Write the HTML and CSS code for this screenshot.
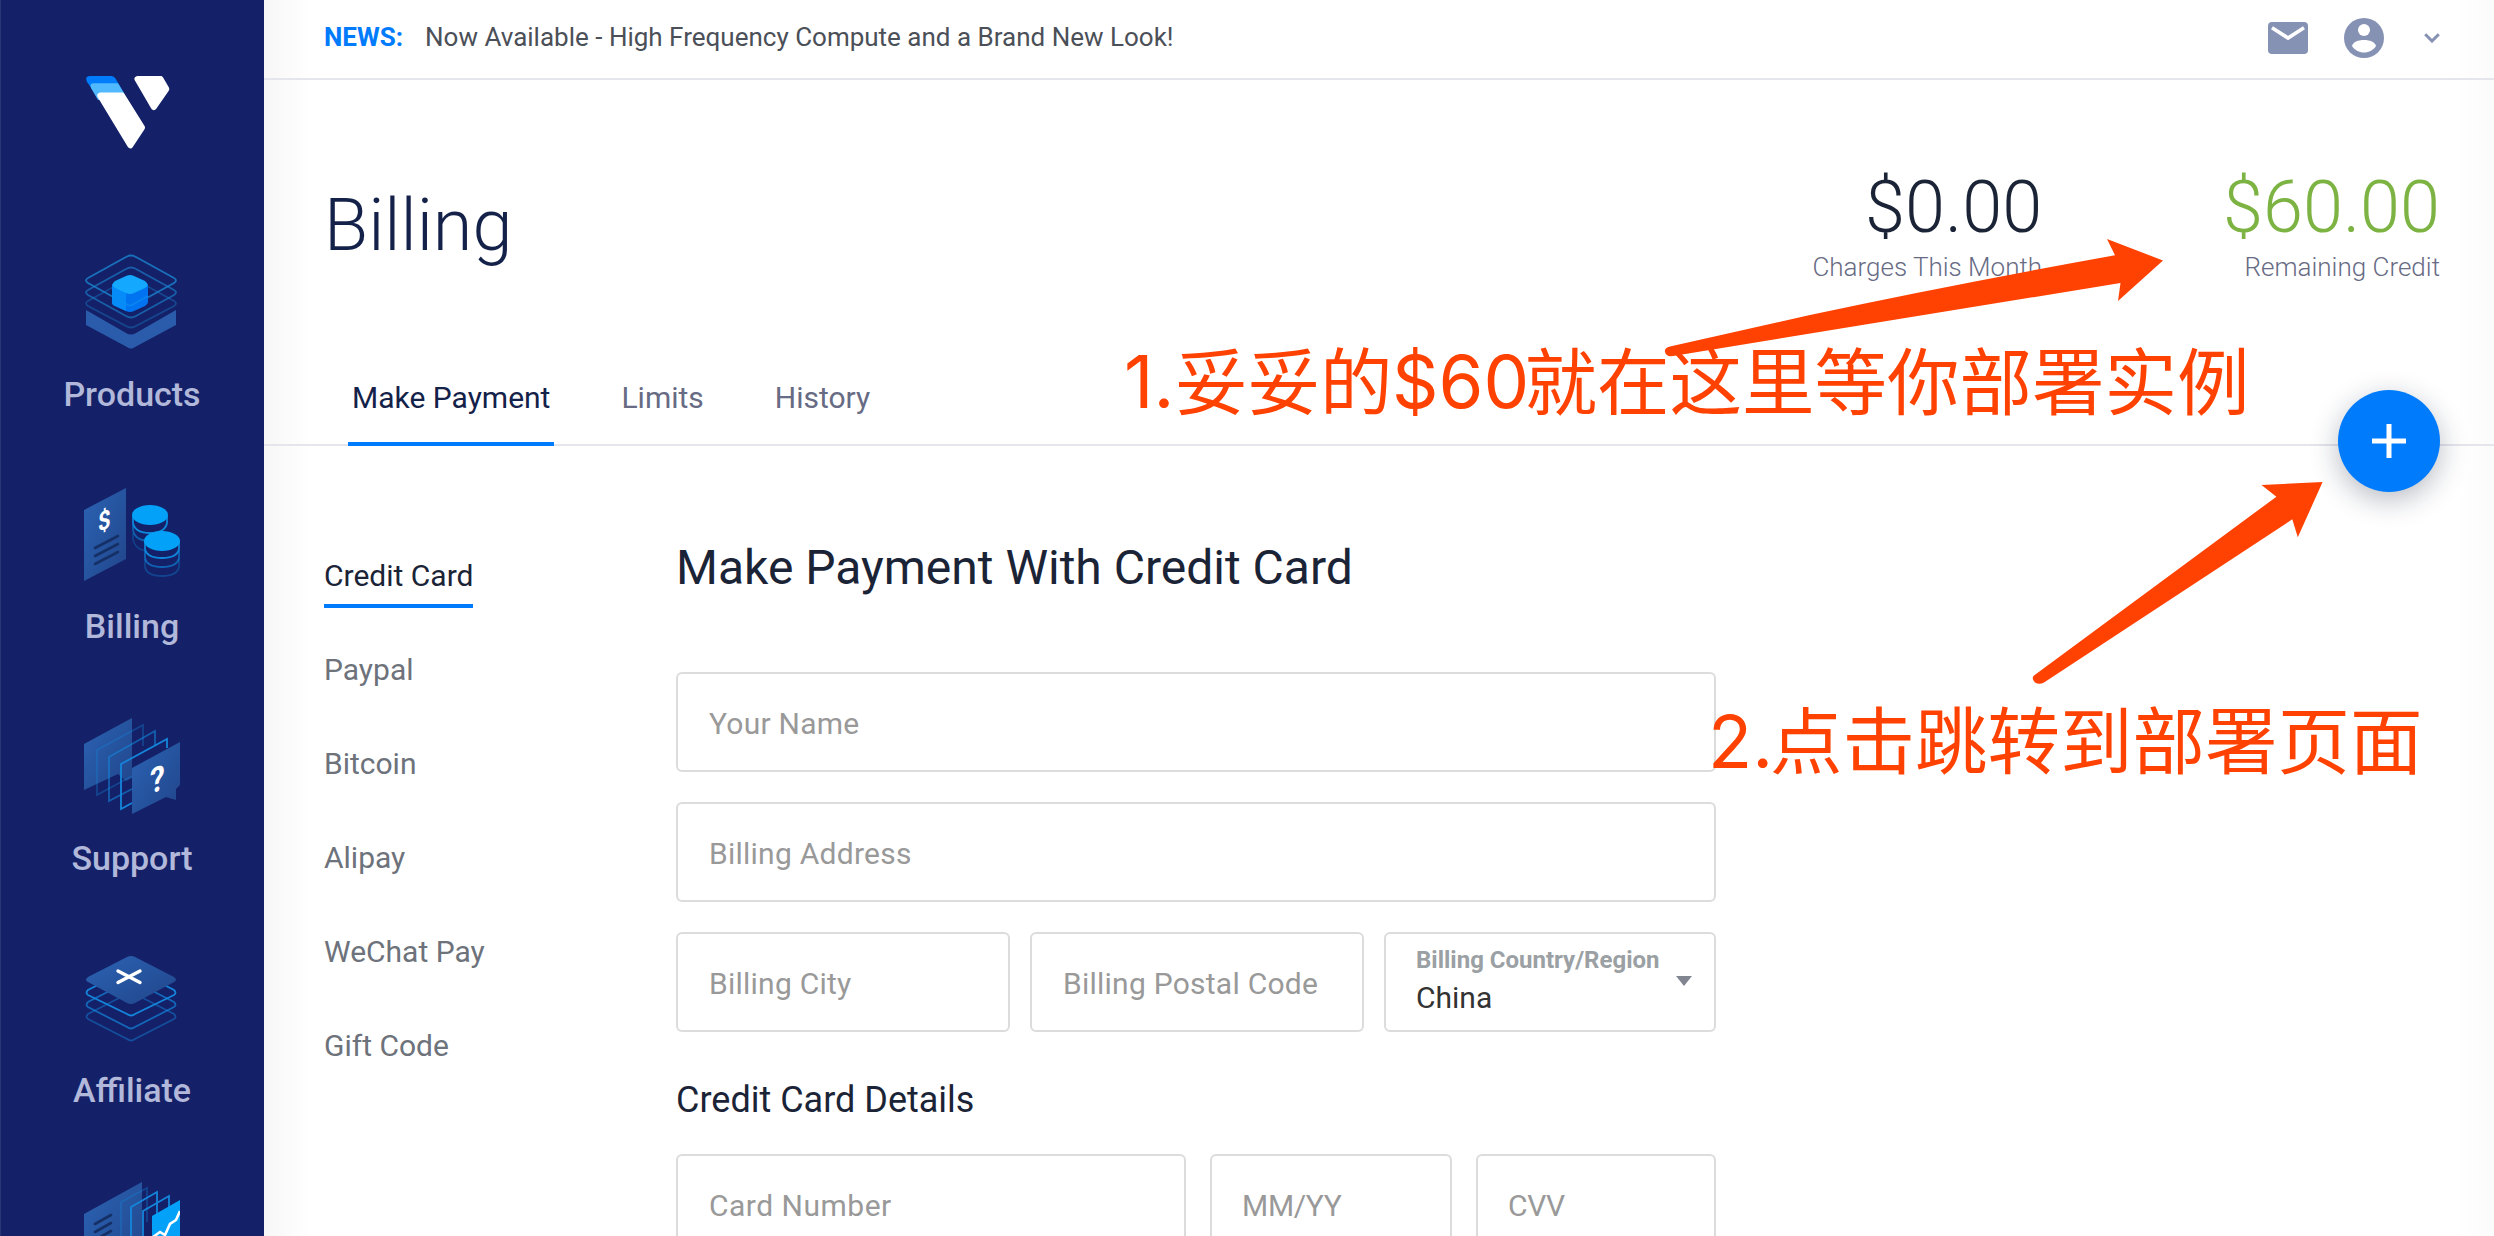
FILE: index.html
```html
<!DOCTYPE html>
<html lang="en">
<head>
<meta charset="utf-8">
<title>Billing</title>
<link rel="stylesheet" href="styles.css">
</head>
<body>
<div class="app">
  <aside class="sidebar">
    <svg class="logo" viewBox="0 0 84 73" width="84" height="73">
      <path d="M4 0h21.500q2.500 0 4 2.500L38 17 11 20 1 6Q-1.500 0 4 0z" fill="#007bfc"/>
      <path d="M8 7.200h24L38.500 18 12 24 5 12q-2-4.800 3-4.800z" fill="#51b9ff"/>
      <g fill="#fff" stroke="#fff" stroke-width="6" stroke-linejoin="round">
        <path d="M14.300 19.600H36L56 51.500 44.300 69.300z"/>
        <path d="M51.500 3H74.500L80.300 13 67.800 31z"/>
      </g>
    </svg>
    <nav class="menu">
      <a class="menu-item">
        <svg class="menu-icon" viewBox="0 0 96 96">
          <defs>
            <linearGradient id="steel" x1="0" y1="0" x2="1" y2="1"><stop offset="0" stop-color="#2b63b4"/><stop offset="1" stop-color="#21458a"/></linearGradient>
          </defs>
          <path d="M2 56l40 23q5 3 10 0l40-23v15L51 93q-4 3-8 0L2 71z" fill="#2b5cab"/>
          <g fill="none" stroke-width="1.8" stroke="#1a7fcb">
            <path d="M42 26q5-3 10 0l38 21q4 2 0 5L52 72q-5 3-10 0L4 52q-4-3 0-5z" opacity=".4"/>
            <path d="M42 15q5-3 10 0l38 21q4 2 0 5L52 62q-5 3-10 0L4 41q-4-3 0-5z" opacity=".65"/>
            <path d="M42 3q5-3 10 0l38 21q4 2 0 5L52 50q-5 3-10 0L4 29q-4-3 0-5z" opacity=".85"/>
          </g>
          <path d="M28 30v18q0 3 3 4l11 5q4 2 8 0l11-5q3-2 3-4V30z" fill="#0074f0"/>
          <path d="M28 30v18q0 3 3 4l11 5V38z" fill="#068cf8"/>
          <path d="M64 42L48 51q-2 1-4 0L28 42" fill="none" stroke="#0c8df0" stroke-width="1.6" opacity=".7"/>
          <path d="M31 27l11-5q4-2 8 0l11 5q5 4 0 7l-11 5q-4 2-8 0l-11-5q-5-3 0-7z" fill="#14a9ff"/>
        </svg>
        <span>Products</span>
      </a>
      <a class="menu-item">
        <svg class="menu-icon" viewBox="0 0 96 96">
          <path d="M0 24L42 2v71L0 95z" fill="url(#steel)"/>
          <text class="glyph" x="0" y="0" font-size="26" transform="matrix(.85 -.35 0 1 14 46)">$</text>
          <path d="M11 62l23-12M11 70l23-12M11 78l23-12" stroke="#153066" stroke-width="2.6" stroke-linecap="round"/>
          <g fill="none" stroke="#0e86da" stroke-width="1.8">
            <path d="M49 30v7q2 10 17 10t17-10v-7"/><path d="M49 38v6q2 11 17 11" opacity=".6"/><path d="M49 47v6q1 9 12 12" opacity=".3"/>
          </g>
          <ellipse cx="66" cy="29" rx="18" ry="10" fill="#03a1f8"/>
          <path d="M60 58q0-12 18-12t18 12v30H60z" fill="#142168"/>
          <g fill="none" stroke="#0e86da" stroke-width="1.8">
            <path d="M61 55v8q2 9 17 9t17-9v-8"/><path d="M61 64v8q2 9 17 9t17-9v-8" opacity=".65"/><path d="M61 73v8q2 9 17 9t17-9v-8" opacity=".35"/>
          </g>
          <ellipse cx="78" cy="55" rx="18" ry="10" fill="#03a1f8"/>
        </svg>
        <span>Billing</span>
      </a>
      <a class="menu-item">
        <svg class="menu-icon" viewBox="0 0 96 96">
          <path d="M0 26L48 0v60l-6 3-8-7L0 72z" fill="url(#steel)"/>
          <g fill="none" stroke="#1485db" stroke-width="1.8">
            <path d="M59 28V7L13 32v45l35-19" opacity=".35"/>
            <path d="M71 28V13L25 39v44l23-12" opacity=".6"/>
            <path d="M83 30V21L37 46v45l11-6"/>
          </g>
          <path d="M48 50l48-26v43l-4 4v11l-10-3L48 96z" fill="url(#steel)"/>
          <text class="glyph" font-size="35" transform="matrix(.85 -.3 0 1 66 76)">?</text>
        </svg>
        <span>Support</span>
      </a>
      <a class="menu-item">
        <svg class="menu-icon" viewBox="0 0 96 96">
          <g fill="none" stroke="#1485db" stroke-width="1.8">
            <path d="M43 44q4-2 8 0l39 20q3 3 0 5L51 89q-4 3-8 0L4 69q-3-2 0-5z" opacity=".45"/>
            <path d="M43 32q4-2 8 0l39 20q3 3 0 5L51 77q-4 3-8 0L4 57q-3-2 0-5z" opacity=".7"/>
            <path d="M43 20q4-2 8 0l39 20q3 3 0 5L51 64q-4 3-8 0L4 45q-3-2 0-5z"/>
          </g>
          <path d="M43 7q4-2 8 0l39 20q4 3 0 5L51 53q-4 2-8 0L4 32q-4-2 0-5z" fill="url(#steel)"/>
          <path d="M34 21l22 11.500M56 21L34 32.500" stroke="#fff" stroke-width="3.4" stroke-linecap="round"/>
        </svg>
        <span>Affiliate</span>
      </a>
      <a class="menu-item">
        <svg class="menu-icon" viewBox="0 0 96 96">
          <path d="M0 32L58 0v66L0 94z" fill="url(#steel)"/>
          <path d="M11 42l16-9M11 50l16-9M11 58l16-9" stroke="#153066" stroke-width="2.6" stroke-linecap="round"/>
          <g fill="none" stroke="#1485db" stroke-width="1.8">
            <path d="M37 80V20L63 6v34" opacity=".35"/><path d="M47 80V25l26-15v30"/><path d="M59 80V29l26-15v12"/>
          </g>
          <path d="M68 34l28-16v60H68z" fill="#03a1f8"/>
          <path d="M69 55l7-5 5 3 5-11 6-4 4-9" fill="none" stroke="#fff" stroke-width="2.6"/>
        </svg>
      </a>
    </nav>
  </aside>

  <main class="main">
    <header class="topbar">
      <div class="news"><b>NEWS:</b><span>Now Available - High Frequency Compute and a Brand New Look!</span></div>
      <div class="account">
        <svg width="40" height="32" viewBox="0 0 40 32"><rect width="40" height="32" rx="4" fill="#8692b4"/><path d="M4 5.800l16 10.200 16-10.200" fill="none" stroke="#fff" stroke-width="3.600"/></svg>
        <svg width="40" height="40" viewBox="0 0 40 40"><circle cx="20" cy="20" r="20" fill="#8692b4"/><circle cx="20" cy="12" r="6" fill="#fff"/><path d="M8 28c1-4 6-6 12-6s11 2 12 6c-2.500 4-7 6.500-12 6.500S10.500 32 8 28z" fill="#fff"/></svg>
        <svg class="chevron" width="16" height="10" viewBox="0 0 16 10"><path d="M1.200 1.200L8 8l6.800-6.800" fill="none" stroke="#8692b4" stroke-width="3"/></svg>
      </div>
    </header>

    <section class="page-head">
      <h1>Billing</h1>
      <div class="stats">
        <div class="stat"><strong>$0.00</strong><span>Charges This Month</span></div>
        <div class="stat credit"><strong>$60.00</strong><span>Remaining Credit</span></div>
      </div>
    </section>

    <nav class="tabs">
      <a class="tab active">Make Payment</a>
      <a class="tab">Limits</a>
      <a class="tab">History</a>
      <button class="add"><svg width="34" height="34" viewBox="0 0 34 34"><path d="M17 0v34M0 17h34" stroke="#fff" stroke-width="5"/></svg></button>
    </nav>

    <section class="content">
      <nav class="methods">
        <a class="method active">Credit Card</a>
        <a class="method">Paypal</a>
        <a class="method">Bitcoin</a>
        <a class="method">Alipay</a>
        <a class="method">WeChat Pay</a>
        <a class="method">Gift Code</a>
      </nav>
      <form class="form">
        <h2>Make Payment With Credit Card</h2>
        <div class="field">Your Name</div>
        <div class="field">Billing Address</div>
        <div class="row place">
          <div class="field">Billing City</div>
          <div class="field">Billing Postal Code</div>
          <div class="field select"><div><label>Billing Country/Region</label><span>China</span></div><i class="caret"></i></div>
        </div>
        <h3>Credit Card Details</h3>
        <div class="row card">
          <div class="field number">Card Number</div>
          <div class="field short">MM/YY</div>
          <div class="field short">CVV</div>
        </div>
      </form>
    </section>
  </main>

  <svg class="notes" width="2494" height="1236" viewBox="0 0 2494 1236">
    <path d="M1670 346.500L1810 315Q1950 285 2115 255.300L2107 239l56 21.500L2118 301l2.500-18L1673 356q-7 1-8-4-1-4 5-5.500z"/>
    <path d="M2034 675.500L2276.400 496.700 2261.500 485l61.100-3L2297.800 537.300 2292.300 519.300 2044 682.500q-5 2.500-9 0-4-4-1-7z"/>
    <text y="409"><tspan x="1124" y="408">1.</tspan><tspan x="1175" y="409">妥妥的</tspan><tspan x="1392" y="408">$60</tspan><tspan x="1524.500" y="409">就在这里等你部署实例</tspan></text>
    <text y="768"><tspan x="1708">2.</tspan><tspan x="1770">点击跳转到部署页面</tspan></text>
  </svg>
</div>
</body>
</html>
```
FILE: styles.css
```css
* { box-sizing: border-box; }
body { margin: 0; font-family: Roboto, "Noto Sans CJK SC", sans-serif; color: #1b2436; background: #fff; }
h1, h2, h3 { margin: 0; font-weight: 400; }
.app { position: relative; display: flex; width: 2494px; height: 1236px; overflow: hidden; }

.sidebar { width: 264px; flex: none; background: #142168; box-shadow: inset 1px 0 #2a3573; display: flex; flex-direction: column; align-items: center; padding-top: 76px; }
.logo { margin-left: -8px; flex: none; }
.menu { display: flex; flex-direction: column; margin-top: 105px; align-items: center; }
.menu-item { height: 232px; flex: none; display: flex; flex-direction: column; align-items: center; gap: 24px; color: #b1b8d9; font-size: 34px; line-height: 40px; font-weight: 500; }
.menu-icon { width: 96px; height: 96px; flex: none; }
.glyph { fill: #fff; font-weight: 700; }

.main { flex: 1; display: flex; flex-direction: column; min-width: 0;
  background: linear-gradient(90deg, #f7f7f7, #fff 48px, #fff calc(100% - 40px), #fbfbfb); }
.topbar { height: 80px; flex: none; border-bottom: 2px solid #e5e5ec; display: flex; justify-content: space-between; align-items: center; padding: 0 54px 4px 60px; }
.news { display: flex; gap: 22px; font-size: 26px; color: #4b5058; }
.news b { color: #007bfc; }
.account { display: flex; align-items: center; gap: 36px; padding-top: 2px; }
.chevron { margin-left: 4px; }

.page-head { height: 290px; flex: none; display: flex; justify-content: space-between; padding: 0 54px 0 60px; }
h1 { font-size: 72px; font-weight: 300; line-height: 84px; color: #142149; margin-top: 104px; }
.stats { display: flex; gap: 181px; margin-top: 85px; }
.stat { display: flex; flex-direction: column; align-items: flex-end; font-weight: 300; }
.stat strong { font-size: 72px; font-weight: 300; line-height: 86px; }
.stat span { font-size: 26px; line-height: 32px; color: #676b84; }
.credit strong { color: #7cb342; }

.tabs { position: relative; height: 76px; flex: none; border-bottom: 2px solid #e5e5ec; display: flex; gap: 63px; padding-left: 84px; }
.tab { height: 76px; padding: 10px 4px 0; font-size: 30px; line-height: 36px; color: #676b84; }
.tab.active { color: #142149; border-bottom: 4px solid #007bfc; }
.add { position: absolute; right: 54px; top: 20px; width: 102px; height: 102px; padding: 0; border: 0; border-radius: 50%; background: #007bfc; display: flex; align-items: center; justify-content: center; box-shadow: 0 8px 28px rgba(20, 33, 60, .3); }

.content { display: flex; padding-left: 60px; }
.methods { width: 352px; display: flex; flex-direction: column; align-items: flex-start; gap: 46px; padding-top: 110px; }
.method { height: 48px; padding-top: 2px; font-size: 30px; line-height: 36px; color: #6d727b; white-space: nowrap; }
.method.active { height: 52px; margin-bottom: -4px; color: #1b2436; border-bottom: 4px solid #007bfc; }
.form { width: 1040px; display: flex; flex-direction: column; }
h2 { font-size: 48px; line-height: 56px; margin: 94px 0 76px; }
.field { height: 100px; flex: none; border: 2px solid #dcdcdc; border-radius: 6px; padding: 2px 31px 0; font-size: 30px; letter-spacing: .25px; color: #999; display: flex; align-items: center; margin-bottom: 30px; background: #fff; }
.row { display: grid; }
.place { grid-template-columns: 334px 334px 332px; column-gap: 20px; }
.card { grid-template-columns: 510px 242px 240px; column-gap: 24px; }
.number { letter-spacing: .5px; }
.short { padding-left: 30px; letter-spacing: -.3px; }
.select { justify-content: space-between; padding: 0 22px 3px 30px; letter-spacing: 0; }
.select div { display: flex; flex-direction: column; }
.select label { font-size: 24px; line-height: 28px; font-weight: 700; color: #9aa0a3; }
.select span { color: #333; line-height: 36px; margin-top: 6px; }
.caret { border: 8px solid transparent; border-top: 10px solid #808590; border-bottom: 0; }
h3 { font-size: 36px; line-height: 42px; margin: 17px 0 33px; }

.notes { position: absolute; left: 0; top: 0; fill: #ff4202; }
.notes text { font-family: Inter, "Noto Sans CJK SC", sans-serif; font-size: 72.5px; }
```
